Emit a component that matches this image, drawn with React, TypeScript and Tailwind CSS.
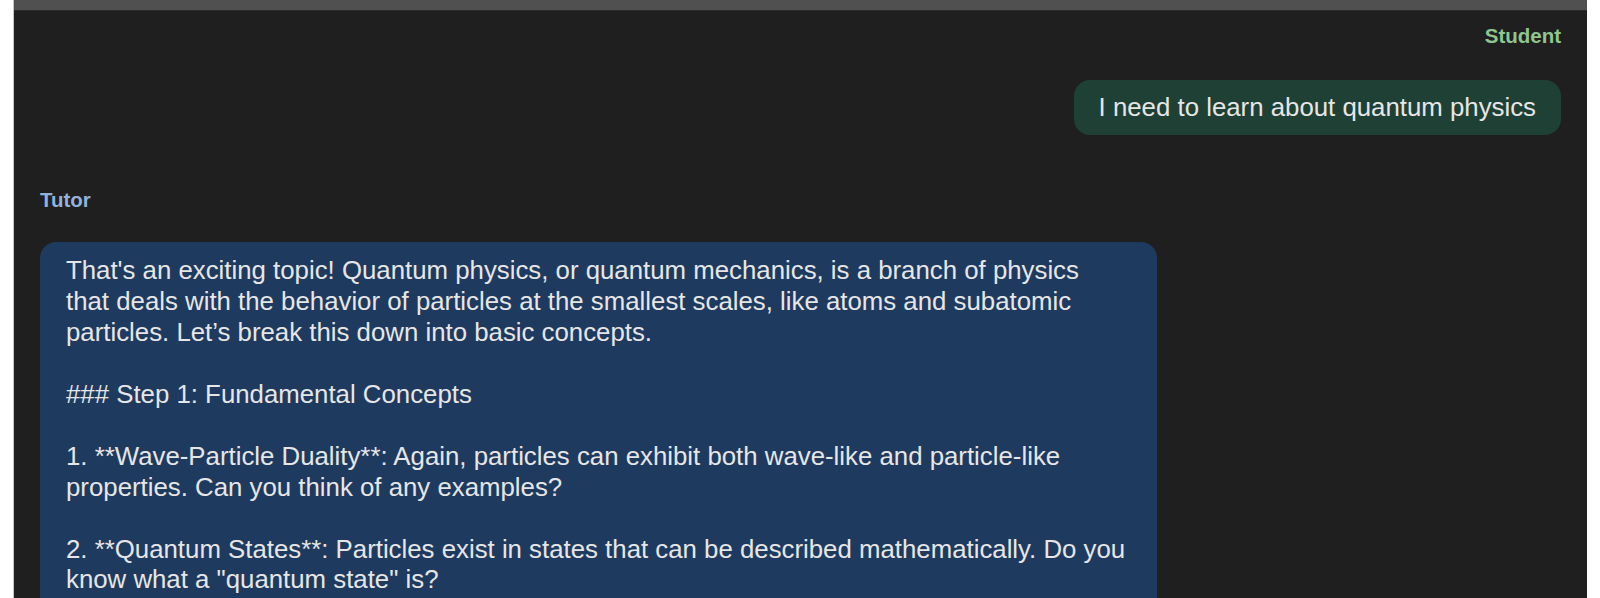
import React from "react";

const TUTOR_TEXT = `That's an exciting topic! Quantum physics, or quantum mechanics, is a branch of physics that deals with the behavior of particles at the smallest scales, like atoms and subatomic particles. Let’s break this down into basic concepts.

### Step 1: Fundamental Concepts

1. **Wave-Particle Duality**: Again, particles can exhibit both wave-like and particle-like properties. Can you think of any examples?

2. **Quantum States**: Particles exist in states that can be described mathematically. Do you know what a "quantum state" is?

3. **Superposition**: A particle can be in more than one state at the same time until it is measured. Have you heard of this idea before?`;

const messages = [
  { role: "student", text: "I need to learn about quantum physics" },
  { role: "tutor", text: TUTOR_TEXT },
];

export default function App() {
  return (
    <div
      className="min-h-screen bg-white px-[13px]"
      style={{ fontFamily: '"Liberation Sans", Arial, sans-serif' }}
    >
      <div className="min-h-screen border-l border-[#c4c4c4] bg-[#1f1f1f]">
        <div className="h-[10px] bg-[#505050]" />
        <div className="h-px bg-[#2b2b2b]" />
        <div className="flex flex-col px-[26px] pt-[13px]">
          {messages.map((m, i) =>
            m.role === "student" ? (
              <div key={i} className="flex flex-col items-end">
                <div className="text-[20.5px] font-bold leading-[24px] text-[#8fc68f]">Student</div>
                <div className="mt-[32px] rounded-[16px] bg-[#1f4034] px-[25px] py-[12px] text-[25.8px] leading-[1.2] text-[#e6e6e6]">
                  {m.text}
                </div>
              </div>
            ) : (
              <div key={i} className="mt-[53px] flex flex-col items-start">
                <div className="text-[20.5px] font-bold leading-[24px] text-[#8fb3dc]">Tutor</div>
                <div className="mt-[30px] w-[1117px] whitespace-pre-wrap rounded-[16px] bg-[#1f3a5f] py-[13px] pl-[26px] pr-[29px] text-[25.8px] leading-[1.2] text-[#e6e6e6]">
                  {m.text}
                </div>
              </div>
            )
          )}
        </div>
      </div>
    </div>
  );
}
